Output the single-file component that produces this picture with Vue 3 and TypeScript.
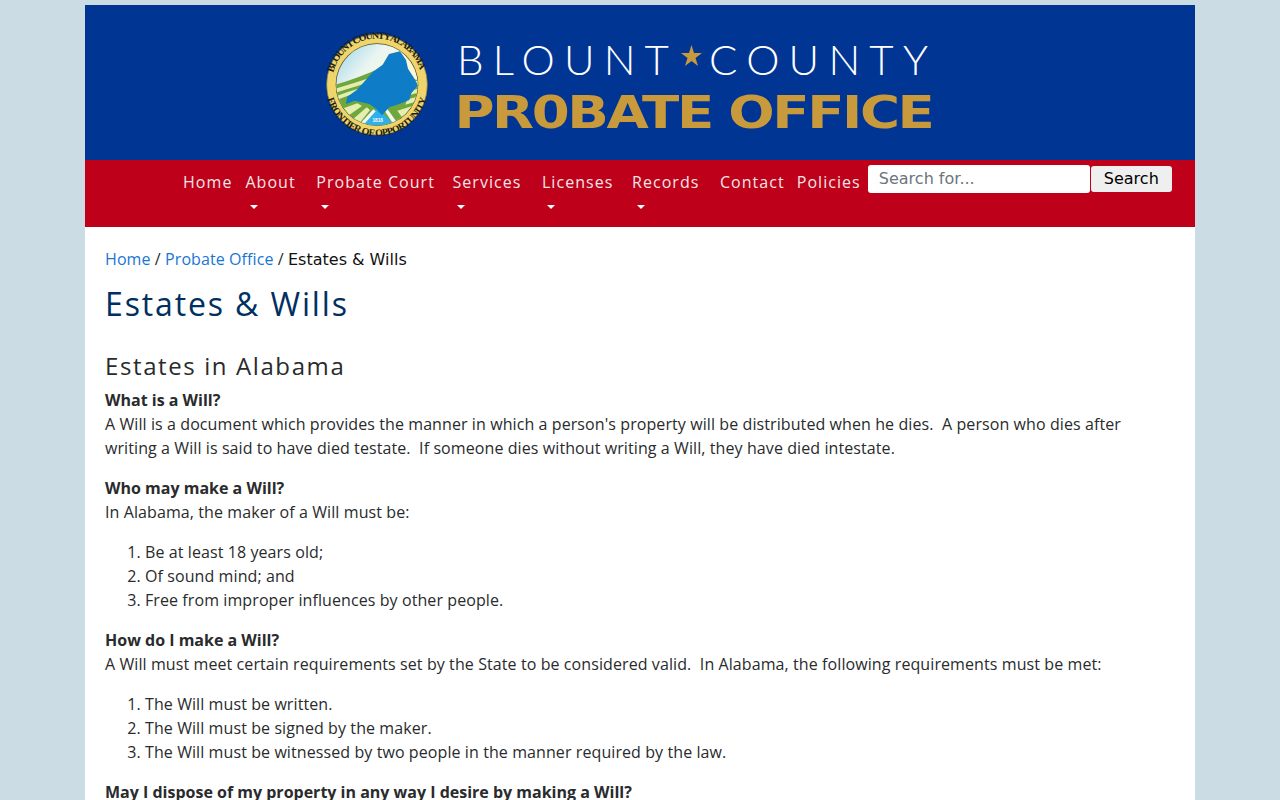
<script setup lang="ts">
interface NavItem { label: string; caret: boolean; cls: string }
const nav: NavItem[] = [
  { label: 'Home', caret: false, cls: '' },
  { label: 'About', caret: true, cls: 'gap-7' },
  { label: 'Probate Court', caret: true, cls: 'gap-5' },
  { label: 'Services', caret: true, cls: 'gap-7' },
  { label: 'Licenses', caret: true, cls: 'gap-6' },
  { label: 'Records', caret: true, cls: 'gap-7' },
  { label: 'Contact', caret: false, cls: 'tight' },
  { label: 'Policies', caret: false, cls: '' },
]
</script>

<template>
  <div class="page">
    <header class="masthead">
      <svg class="seal" viewBox="0 0 345 345" role="img" aria-label="Blount County Alabama seal">
        <defs>
          <clipPath id="disc"><circle cx="171" cy="170" r="122" /></clipPath>
          <linearGradient id="sky" x1="0" y1="0" x2="0.6" y2="0.5">
            <stop offset="0" stop-color="#8fcfe8" />
            <stop offset="0.6" stop-color="#eaf5f2" />
            <stop offset="1" stop-color="#fbf7d8" />
          </linearGradient>
          <path id="arcTop" d="M 40 134 A 135 135 0 0 1 302 134" />
          <path id="arcBottom" d="M 22 212 A 155 155 0 0 0 320 212" />
        </defs>
        <circle cx="171" cy="170" r="151" fill="#efd56c" stroke="#8c7a2c" stroke-width="2" />
        <circle cx="171" cy="170" r="124" fill="#4d4a22" />
        <g clip-path="url(#disc)">
          <rect x="40" y="40" width="265" height="265" fill="url(#sky)" />
          <path d="M40 172 Q110 152 190 116 L300 160 L310 300 L40 300Z" fill="#6ea83c" />
          <path d="M40 184 Q100 166 160 146 L160 158 Q100 178 40 196Z" fill="#e5eeb0" />
          <path d="M40 208 Q80 192 130 178 L130 190 Q80 202 40 220Z" fill="#e5eeb0" />
          <path d="M276 162 L310 154 L310 166 L280 176Z" fill="#e5eeb0" />
          <path d="M270 188 L310 178 L310 190 L266 202Z" fill="#e5eeb0" />
          <path d="M262 214 L310 202 L310 214 L256 230Z" fill="#e5eeb0" />
          <path d="M232 248 L310 224 L310 236 L246 268Z" fill="#e5eeb0" />
          <path d="M256 276 L310 244 L310 256 L268 292Z" fill="#e5eeb0" />
          <path d="M62 244 L112 226 L126 234 L78 268Z" fill="#e5eeb0" />
          <path d="M92 280 L140 238 L150 246 L110 296Z" fill="#e5eeb0" />
          <path d="M106 304 L172 240 L238 304Z" fill="#2fb0ea" />
          <path d="M112 296 L160 244 L167 250 L122 300Z" fill="#f4f8f0" />
          <path d="M240 296 L190 226 L183 232 L228 300Z" fill="#f4f8f0" />
          <path d="M207 78 L240 70 L258 96 L264 122 L282 150 L294 172 L274 196 L268 216 L238 228 L208 238 L186 262 L168 242 L148 228 L104 218 L78 228 L82 206 L110 186 L134 160 L158 132 L188 110Z" fill="#0f7cc8" />
        </g>
        <text class="seal-year" x="173" y="281" text-anchor="middle">1818</text>
        <text class="seal-text"><textPath href="#arcTop" textLength="350" lengthAdjust="spacing">BLOUNT COUNTY ALABAMA</textPath></text>
        <text class="seal-text"><textPath href="#arcBottom" textLength="400" lengthAdjust="spacing">FRONTIER OF OPPORTUNITY</textPath></text>
      </svg>
      <svg class="wordmark" viewBox="0 0 490 110" role="img" aria-label="Blount County Probate Office">
        <text class="line-one" x="7" y="47" textLength="212" lengthAdjust="spacing">BLOUNT</text>
        <polygon class="star" points="241.5,17 244,25 252,25 245.5,30 248,38 241.5,33 235,38 237.5,30 231,25 239,25" />
        <text class="line-one" x="259" y="47" textLength="219" lengthAdjust="spacing">COUNTY</text>
        <text class="line-two" x="4.5" y="100" textLength="478" lengthAdjust="spacingAndGlyphs">PR0BATE OFFICE</text>
      </svg>
    </header>

    <nav class="menu">
      <a v-for="item in nav" :key="item.label" class="menu-item" :class="item.cls">
        <span>{{ item.label }}</span>
        <i v-if="item.caret" class="caret"></i>
      </a>
      <form class="search" @submit.prevent>
        <input class="search-input" type="text" placeholder="Search for..." />
        <button class="search-button" type="submit">Search</button>
      </form>
    </nav>

    <main class="content">
      <div class="crumbs"><a>Home</a> / <a>Probate Office</a> / <span class="current">Estates &amp; Wills</span></div>
      <h1>Estates &amp; Wills</h1>
      <h2>Estates in Alabama</h2>

      <p><strong>What is a Will?</strong><br />
        A Will is a document which provides the manner in which a person's property will be distributed when he dies.&nbsp; A person who dies after writing a Will is said to have died testate.&nbsp; If someone dies without writing a Will, they have died intestate.</p>

      <p><strong>Who may make a Will?</strong><br />
        In Alabama, the maker of a Will must be:</p>
      <ol>
        <li>Be at least 18 years old;</li>
        <li>Of sound mind; and</li>
        <li>Free from improper influences by other people.</li>
      </ol>

      <p><strong>How do I make a Will?</strong><br />
        A Will must meet certain requirements set by the State to be considered valid.&nbsp; In Alabama, the following requirements must be met:</p>
      <ol>
        <li>The Will must be written.</li>
        <li>The Will must be signed by the maker.</li>
        <li>The Will must be witnessed by two people in the manner required by the law.</li>
      </ol>

      <p><strong>May I dispose of my property in any way I desire by making a Will?</strong></p>
    </main>
  </div>
</template>

<style>
html, body { background: #cbdce4; }
</style>

<style scoped>
.page {
  width: 1110px;
  margin: 5px auto 0;
  background: #fff;
  font-family: "Open Sans", sans-serif;
  font-size: 16px;
  line-height: 24px;
  letter-spacing: 0.09px;
  color: #292b2c;
}
strong { letter-spacing: 0; }
.masthead {
  height: 155px;
  background: #003594;
  display: flex;
  align-items: center;
  justify-content: center;
  gap: 15px;
  padding-right: 20px;
  box-sizing: border-box;
}
.seal { width: 115px; height: 115px; flex: none; margin-top: 5px; }
.wordmark { width: 490px; height: 110px; flex: none; }
.seal-text {
  font-family: "Liberation Serif", serif;
  font-weight: 700;
  font-size: 30px;
  letter-spacing: 0;
  fill: #1e1d10;
}
.seal-year {
  font-family: "Liberation Sans", sans-serif;
  font-weight: 700;
  font-size: 14px;
  fill: #fff;
}
.line-one {
  font-family: "Lato", sans-serif;
  font-weight: 300;
  font-size: 42px;
  fill: #fff;
}
.line-two {
  font-family: "DejaVu Sans", sans-serif;
  font-weight: 700;
  font-size: 45px;
  letter-spacing: -2px;
  fill: #c99a3c;
}
.star { fill: #c99a3c; }

.menu {
  height: 67px;
  background: #be001a;
  display: flex;
  align-items: flex-start;
  padding: 10px 0 0 98px;
  box-sizing: border-box;
  gap: 13px;
}
.menu-item {
  display: flex;
  flex-direction: column;
  align-items: flex-start;
  color: #f4e6e6;
  letter-spacing: 1.05px;
  white-space: nowrap;
}
.gap-7 { margin-right: 7.5px; }
.gap-6 { margin-right: 5.5px; }
.gap-5 { margin-right: 4.5px; }
.tight { margin-right: -1px; }
.caret {
  width: 0;
  height: 0;
  margin: 11px 0 0 5px;
  border-left: 4px solid transparent;
  border-right: 4px solid transparent;
  border-top: 4px solid #fff;
}
.search {
  display: flex;
  align-items: center;
  gap: 1px;
  margin: -5px 0 0 -6px;
}
.search-input {
  width: 222px;
  height: 28px;
  box-sizing: border-box;
  border: 0;
  border-radius: 3px;
  padding: 0 11px 2px;
  background: #fff;
  font-family: "DejaVu Sans", sans-serif;
  font-size: 16px;
  color: #212529;
  outline: none;
}
.search-input::placeholder { color: #6c757d; opacity: 1; }
.search-button {
  width: 81px;
  height: 26px;
  box-sizing: border-box;
  border: 0;
  border-radius: 3px;
  padding: 0 0 2px;
  background: #efefef;
  font-family: "DejaVu Sans", sans-serif;
  font-size: 16px;
  color: #000;
}

.content { padding: 20px 20px 1px; }
.crumbs a { color: #1976d2; }
.current { font-family: "DejaVu Sans", sans-serif; letter-spacing: 0; color: #111; }
h1 {
  margin: 8px 0 0;
  font-size: 32px;
  line-height: 48px;
  font-weight: 400;
  letter-spacing: 1.87px;
  color: #00305f;
}
h2 {
  margin: 20px 0 0;
  font-size: 24px;
  line-height: 36px;
  font-weight: 400;
  letter-spacing: 1.6px;
}
p { margin: 0 0 16px; }
ol { margin: 0 0 16px; padding-left: 40px; }
h2 + p { margin-top: 4px; }
</style>
